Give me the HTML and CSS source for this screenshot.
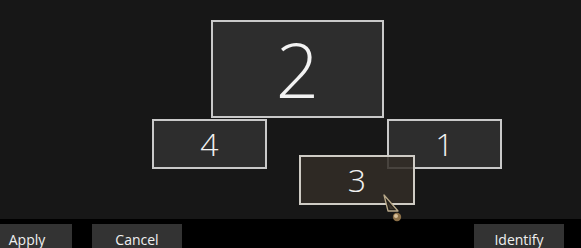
FILE: index.html
```html
<!DOCTYPE html>
<html>
<head>
<meta charset="utf-8">
<link rel="stylesheet" href="styles.css">
</head>
<body>
<div class="app">
  <div class="canvas">
    <div class="monitor m2"><span class="num big">2</span></div>
    <div class="monitor m4"><span class="num">4</span></div>
    <div class="monitor m1"><span class="num">1</span></div>
    <div class="monitor m3 selected"><span class="num">3</span></div>
    <svg class="cursor" width="22" height="30" viewBox="0 0 22 30">
      <polygon points="1,1 5,17 15,17" fill="#221e19" stroke="#b9a98a" stroke-width="1.3" stroke-linejoin="round"/>
      <polygon points="4,8 7,15 11,15" fill="#3a332a"/>
      <circle cx="14" cy="23" r="4.2" fill="#8c7048"/>
      <circle cx="13" cy="22" r="2" fill="#d8c09a"/>
    </svg>
  </div>
  <div class="actions">
    <button class="btn apply">Apply</button>
    <button class="btn cancel">Cancel</button>
    <div class="spacer"></div>
    <button class="btn identify">Identify</button>
  </div>
</div>
</body>
</html>
```

FILE: styles.css
```css
html, body {
  margin: 0;
  padding: 0;
  background: #000;
  overflow: hidden;
}
.app {
  width: 581px;
  height: 248px;
  font-family: "Open Sans", "Noto Sans", sans-serif;
  color: #fff;
}
.canvas {
  position: relative;
  height: 219px;
  background: #171717;
}
.monitor {
  position: absolute;
  box-sizing: border-box;
  border: 2px solid #c9c9c9;
  background: #2d2d2d;
  display: flex;
  align-items: center;
  justify-content: center;
}
.num {
  font-weight: 300;
  font-size: 32px;
  line-height: 1;
  color: #f2f2f2;
}
.num.big {
  font-size: 76px;
}
.m2 { left: 211px; top: 20px; width: 173px; height: 98px; }
.m4 { left: 152px; top: 119px; width: 115px; height: 50px; }
.m1 { left: 387px; top: 119px; width: 115px; height: 50px; }
.m3 {
  left: 299px; top: 155px; width: 116px; height: 50px;
  background: rgba(50, 44, 38, 0.86);
  border-color: rgba(215, 212, 206, 0.95);
}
.cursor {
  position: absolute;
  left: 383px;
  top: 194px;
}
.actions {
  display: flex;
  margin-top: 5px;
  padding-left: 0;
  padding-right: 17px;
}
.btn {
  height: 32px;
  width: 90px;
  border: none;
  background: #333333;
  color: #f0f0f0;
  font-family: "Open Sans", "Noto Sans", sans-serif;
  font-size: 14px;
  padding: 6px 0 0 0;
  display: flex;
  justify-content: center;
  align-items: flex-start;
}
.apply { margin-left: -18px; }
.cancel { margin-left: 20px; }
.spacer { flex: 1; }
```
